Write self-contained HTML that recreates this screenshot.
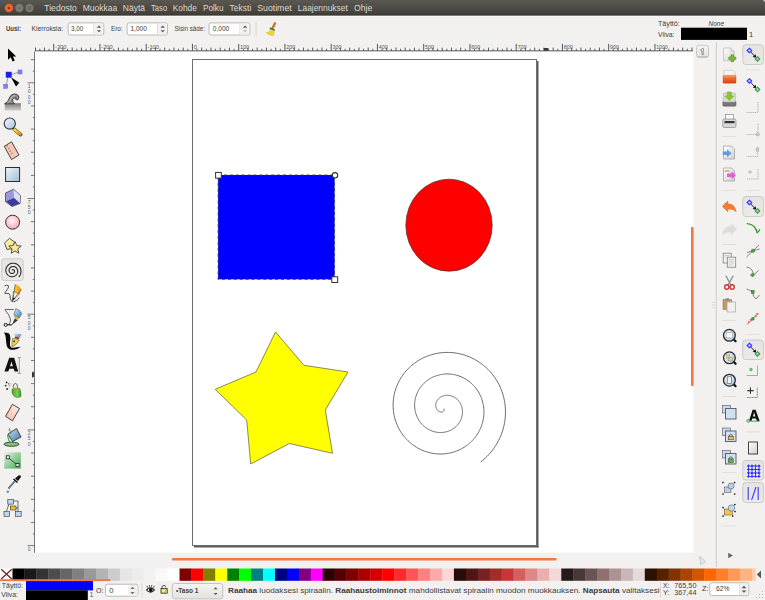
<!DOCTYPE html><html><head><meta charset="utf-8"><style>html,body{margin:0;padding:0;width:765px;height:600px;overflow:hidden;background:#f2f1f0}svg{display:block}text{font-family:"Liberation Sans",sans-serif}</style></head><body>
<svg width="765" height="600" viewBox="0 0 765 600">
<defs>
<linearGradient id="tb" x1="0" y1="0" x2="0" y2="1"><stop offset="0" stop-color="#5b5751"/><stop offset="0.85" stop-color="#45433e"/><stop offset="1" stop-color="#3a3935"/></linearGradient>
<linearGradient id="btn" x1="0" y1="0" x2="0" y2="1"><stop offset="0" stop-color="#f6f5f4"/><stop offset="1" stop-color="#e4e2df"/></linearGradient>
<linearGradient id="pressed" x1="0" y1="0" x2="0" y2="1"><stop offset="0" stop-color="#e6e4e1"/><stop offset="1" stop-color="#eceae8"/></linearGradient>
<radialGradient id="closeg" cx="0.5" cy="0.4" r="0.6"><stop offset="0" stop-color="#f47a4b"/><stop offset="1" stop-color="#e0501c"/></radialGradient>
</defs>
<rect x="0" y="0" width="765" height="600" fill="#f2f1f0"/>
<rect x="0" y="0" width="765" height="15" fill="url(#tb)"/>
<rect x="0" y="15" width="765" height="1" fill="#7e7c78"/><rect x="0" y="16" width="765" height="1" fill="#f9f9f8"/>
<path d="M0 0 H2.2 Q0.6 0.6 0 2.2Z" fill="#2f5fa8"/>
<path d="M765 0 H762.6 Q764.4 0.6 765 2.4Z" fill="#c4ccd8"/>
<circle cx="8.9" cy="8" r="4.3" fill="#ee5a2c"/>
<circle cx="8.9" cy="7.6" r="3.4" fill="#f26a3a" opacity="0.6"/>
<path d="M7.9 7 L9.9 9 M9.9 7 L7.9 9" stroke="#5a2a18" stroke-width="0.9"/>
<circle cx="19.3" cy="8" r="4.2" fill="#78756f"/>
<circle cx="19.3" cy="8" r="3.3" fill="#7e7b75"/>
<rect x="17.8" y="7.6" width="3" height="1" fill="#5c5a55"/>
<circle cx="29.5" cy="8" r="4.2" fill="#78756f"/>
<circle cx="29.5" cy="8" r="3.3" fill="#7e7b75"/>
<rect x="28.2" y="6.7" width="2.6" height="2.6" fill="none" stroke="#5c5a55" stroke-width="0.8"/>
<text x="44.3" y="11" font-size="8.6" fill="#dfdbd2" font-weight="normal" font-style="normal" text-anchor="start" textLength="32.6" lengthAdjust="spacingAndGlyphs">Tiedosto</text>
<text x="82.8" y="11" font-size="8.6" fill="#dfdbd2" font-weight="normal" font-style="normal" text-anchor="start" textLength="34.4" lengthAdjust="spacingAndGlyphs">Muokkaa</text>
<text x="122.8" y="11" font-size="8.6" fill="#dfdbd2" font-weight="normal" font-style="normal" text-anchor="start" textLength="22.2" lengthAdjust="spacingAndGlyphs">Näytä</text>
<text x="151" y="11" font-size="8.6" fill="#dfdbd2" font-weight="normal" font-style="normal" text-anchor="start" textLength="16.2" lengthAdjust="spacingAndGlyphs">Taso</text>
<text x="172.8" y="11" font-size="8.6" fill="#dfdbd2" font-weight="normal" font-style="normal" text-anchor="start" textLength="24.0" lengthAdjust="spacingAndGlyphs">Kohde</text>
<text x="203" y="11" font-size="8.6" fill="#dfdbd2" font-weight="normal" font-style="normal" text-anchor="start" textLength="20.5" lengthAdjust="spacingAndGlyphs">Polku</text>
<text x="229.6" y="11" font-size="8.6" fill="#dfdbd2" font-weight="normal" font-style="normal" text-anchor="start" textLength="21.7" lengthAdjust="spacingAndGlyphs">Teksti</text>
<text x="257.2" y="11" font-size="8.6" fill="#dfdbd2" font-weight="normal" font-style="normal" text-anchor="start" textLength="34.5" lengthAdjust="spacingAndGlyphs">Suotimet</text>
<text x="297.8" y="11" font-size="8.6" fill="#dfdbd2" font-weight="normal" font-style="normal" text-anchor="start" textLength="50.0" lengthAdjust="spacingAndGlyphs">Laajennukset</text>
<text x="353.9" y="11" font-size="8.6" fill="#dfdbd2" font-weight="normal" font-style="normal" text-anchor="start" textLength="18.4" lengthAdjust="spacingAndGlyphs">Ohje</text>
<text x="6" y="31.3" font-size="7.6" fill="#3c3c3c" font-weight="bold" font-style="normal" text-anchor="start" textLength="15" lengthAdjust="spacingAndGlyphs">Uusi:</text>
<text x="31.6" y="31.3" font-size="7.6" fill="#3c3c3c" font-weight="normal" font-style="normal" text-anchor="start" textLength="31.5" lengthAdjust="spacingAndGlyphs">Kierroksia:</text>
<rect x="68.2" y="22.9" width="35.599999999999994" height="12.100000000000001" rx="2" fill="#ffffff" stroke="#bdbab5" stroke-width="1"/>
<path d="M93.8 23.4 V34.5" stroke="#dcdad6" stroke-width="1"/>
<path d="M94.8 23.4 H102.3 V34.5 H94.8Z" fill="#f1f0ee"/>
<path d="M96.8 27.75 L99.0 25.55 L101.2 27.75Z" fill="#5a5a5a"/>
<path d="M96.8 30.15 L99.0 32.35 L101.2 30.15Z" fill="#5a5a5a"/>
<text x="70.9" y="31.3" font-size="7.6" fill="#3c3c3c" font-weight="normal" font-style="normal" text-anchor="start" textLength="12.3" lengthAdjust="spacingAndGlyphs">3,00</text>
<text x="110.9" y="31.3" font-size="7.6" fill="#3c3c3c" font-weight="normal" font-style="normal" text-anchor="start" textLength="11.7" lengthAdjust="spacingAndGlyphs">Ero:</text>
<rect x="127.1" y="22.9" width="40.400000000000006" height="12.100000000000001" rx="2" fill="#ffffff" stroke="#bdbab5" stroke-width="1"/>
<path d="M157.5 23.4 V34.5" stroke="#dcdad6" stroke-width="1"/>
<path d="M158.5 23.4 H166 V34.5 H158.5Z" fill="#f1f0ee"/>
<path d="M160.5 27.75 L162.7 25.55 L164.89999999999998 27.75Z" fill="#5a5a5a"/>
<path d="M160.5 30.15 L162.7 32.35 L164.89999999999998 30.15Z" fill="#5a5a5a"/>
<text x="130.4" y="31.3" font-size="7.6" fill="#3c3c3c" font-weight="normal" font-style="normal" text-anchor="start" textLength="16.5" lengthAdjust="spacingAndGlyphs">1,000</text>
<text x="174.4" y="31.3" font-size="7.6" fill="#3c3c3c" font-weight="normal" font-style="normal" text-anchor="start" textLength="30.6" lengthAdjust="spacingAndGlyphs">Sisin säde:</text>
<rect x="209.0" y="22.9" width="40.900000000000006" height="12.100000000000001" rx="2" fill="#ffffff" stroke="#bdbab5" stroke-width="1"/>
<path d="M239.9 23.4 V34.5" stroke="#dcdad6" stroke-width="1"/>
<path d="M240.9 23.4 H248.4 V34.5 H240.9Z" fill="#f1f0ee"/>
<path d="M242.9 27.75 L245.1 25.55 L247.29999999999998 27.75Z" fill="#5a5a5a"/>
<path d="M242.9 30.15 L245.1 32.35 L247.29999999999998 30.15Z" fill="#b8b8b8"/>
<text x="212.8" y="31.3" font-size="7.6" fill="#3c3c3c" font-weight="normal" font-style="normal" text-anchor="start" textLength="16.5" lengthAdjust="spacingAndGlyphs">0,000</text>
<rect x="255.6" y="22" width="1" height="14" fill="#d9d7d3"/>
<path d="M275 23.3 L273 27.3" stroke="#c27a22" stroke-width="2.4" stroke-linecap="round"/>
<path d="M269.8 28.6 Q271 33 266.2 32.3 Q268.5 35.8 273.6 35.6 Q274.6 32 274.3 30.3 Z" fill="#e9d835" stroke="#c9b020" stroke-width="0.4"/>
<path d="M270 28 L274.6 30" stroke="#5a5a50" stroke-width="1.4"/>
<text x="658" y="25.5" font-size="7.6" fill="#3c3c3c" font-weight="normal" font-style="normal" text-anchor="start" textLength="21.8" lengthAdjust="spacingAndGlyphs">Täyttö:</text>
<text x="708.5" y="25.5" font-size="7.6" fill="#3c3c3c" font-weight="normal" font-style="italic" text-anchor="start" textLength="15.5" lengthAdjust="spacingAndGlyphs">None</text>
<text x="658" y="36.5" font-size="7.6" fill="#3c3c3c" font-weight="normal" font-style="normal" text-anchor="start" textLength="16.5" lengthAdjust="spacingAndGlyphs">Viiva:</text>
<rect x="681" y="27.7" width="66" height="12.2" fill="#000"/>
<text x="749" y="37" font-size="7.6" fill="#3c3c3c" font-weight="normal" font-style="normal" text-anchor="start">1</text>
<rect x="35" y="52" width="658.3" height="500.7" fill="#ffffff"/>
<rect x="35" y="49" width="658" height="1" fill="#ffffff" opacity="0.7"/><rect x="35" y="50" width="658" height="1" fill="#8c8c8c"/><rect x="35" y="51" width="658" height="1" fill="#c8c8c8"/><path d="M35.5 47.6 V50.8" stroke="#444" stroke-width="0.9"/>
<rect x="34" y="51.5" width="1" height="501.2" fill="#777777"/>
<path d="M39.82 48.8V50.8 M44.45 47.6V50.8 M49.07 48.8V50.8 M53.70 43.9V50.8 M58.32 48.8V50.8 M62.95 47.6V50.8 M67.57 48.8V50.8 M72.20 47.6V50.8 M76.82 48.8V50.8 M81.45 47.6V50.8 M86.07 48.8V50.8 M90.70 47.6V50.8 M95.32 48.8V50.8 M99.95 43.9V50.8 M104.57 48.8V50.8 M109.20 47.6V50.8 M113.82 48.8V50.8 M118.45 47.6V50.8 M123.07 48.8V50.8 M127.70 47.6V50.8 M132.32 48.8V50.8 M136.95 47.6V50.8 M141.57 48.8V50.8 M146.20 43.9V50.8 M150.82 48.8V50.8 M155.45 47.6V50.8 M160.07 48.8V50.8 M164.70 47.6V50.8 M169.32 48.8V50.8 M173.95 47.6V50.8 M178.57 48.8V50.8 M183.20 47.6V50.8 M187.82 48.8V50.8 M192.45 43.9V50.8 M197.07 48.8V50.8 M201.70 47.6V50.8 M206.32 48.8V50.8 M210.95 47.6V50.8 M215.57 48.8V50.8 M220.20 47.6V50.8 M224.82 48.8V50.8 M229.45 47.6V50.8 M234.07 48.8V50.8 M238.70 43.9V50.8 M243.32 48.8V50.8 M247.95 47.6V50.8 M252.57 48.8V50.8 M257.20 47.6V50.8 M261.82 48.8V50.8 M266.45 47.6V50.8 M271.07 48.8V50.8 M275.70 47.6V50.8 M280.32 48.8V50.8 M284.95 43.9V50.8 M289.57 48.8V50.8 M294.20 47.6V50.8 M298.82 48.8V50.8 M303.45 47.6V50.8 M308.07 48.8V50.8 M312.70 47.6V50.8 M317.32 48.8V50.8 M321.95 47.6V50.8 M326.57 48.8V50.8 M331.20 43.9V50.8 M335.82 48.8V50.8 M340.45 47.6V50.8 M345.07 48.8V50.8 M349.70 47.6V50.8 M354.32 48.8V50.8 M358.95 47.6V50.8 M363.57 48.8V50.8 M368.20 47.6V50.8 M372.82 48.8V50.8 M377.45 43.9V50.8 M382.07 48.8V50.8 M386.70 47.6V50.8 M391.32 48.8V50.8 M395.95 47.6V50.8 M400.57 48.8V50.8 M405.20 47.6V50.8 M409.82 48.8V50.8 M414.45 47.6V50.8 M419.07 48.8V50.8 M423.70 43.9V50.8 M428.32 48.8V50.8 M432.95 47.6V50.8 M437.57 48.8V50.8 M442.20 47.6V50.8 M446.82 48.8V50.8 M451.45 47.6V50.8 M456.07 48.8V50.8 M460.70 47.6V50.8 M465.32 48.8V50.8 M469.95 43.9V50.8 M474.57 48.8V50.8 M479.20 47.6V50.8 M483.82 48.8V50.8 M488.45 47.6V50.8 M493.07 48.8V50.8 M497.70 47.6V50.8 M502.32 48.8V50.8 M506.95 47.6V50.8 M511.57 48.8V50.8 M516.20 43.9V50.8 M520.83 48.8V50.8 M525.45 47.6V50.8 M530.08 48.8V50.8 M534.70 47.6V50.8 M539.33 48.8V50.8 M543.95 47.6V50.8 M548.58 48.8V50.8 M553.20 47.6V50.8 M557.83 48.8V50.8 M562.45 43.9V50.8 M567.08 48.8V50.8 M571.70 47.6V50.8 M576.33 48.8V50.8 M580.95 47.6V50.8 M585.58 48.8V50.8 M590.20 47.6V50.8 M594.83 48.8V50.8 M599.45 47.6V50.8 M604.08 48.8V50.8 M608.70 43.9V50.8 M613.33 48.8V50.8 M617.95 47.6V50.8 M622.58 48.8V50.8 M627.20 47.6V50.8 M631.83 48.8V50.8 M636.45 47.6V50.8 M641.08 48.8V50.8 M645.70 47.6V50.8 M650.33 48.8V50.8 M654.95 43.9V50.8 M659.58 48.8V50.8 M664.20 47.6V50.8 M668.83 48.8V50.8 M673.45 47.6V50.8 M678.08 48.8V50.8 M682.70 47.6V50.8 M687.33 48.8V50.8 M691.95 47.6V50.8" stroke="#444" stroke-width="0.9"/>
<text x="55.0" y="48.6" font-size="5.9" fill="#4c5662" font-weight="normal" font-style="normal" text-anchor="start" textLength="11.3" lengthAdjust="spacingAndGlyphs">-300</text>
<text x="101.25" y="48.6" font-size="5.9" fill="#4c5662" font-weight="normal" font-style="normal" text-anchor="start" textLength="11.3" lengthAdjust="spacingAndGlyphs">-200</text>
<text x="147.5" y="48.6" font-size="5.9" fill="#4c5662" font-weight="normal" font-style="normal" text-anchor="start" textLength="11.3" lengthAdjust="spacingAndGlyphs">-100</text>
<text x="193.75" y="48.6" font-size="5.9" fill="#4c5662" font-weight="normal" font-style="normal" text-anchor="start" textLength="3.2" lengthAdjust="spacingAndGlyphs">0</text>
<text x="240.0" y="48.6" font-size="5.9" fill="#4c5662" font-weight="normal" font-style="normal" text-anchor="start" textLength="9.0" lengthAdjust="spacingAndGlyphs">100</text>
<text x="286.25" y="48.6" font-size="5.9" fill="#4c5662" font-weight="normal" font-style="normal" text-anchor="start" textLength="9.0" lengthAdjust="spacingAndGlyphs">200</text>
<text x="332.5" y="48.6" font-size="5.9" fill="#4c5662" font-weight="normal" font-style="normal" text-anchor="start" textLength="9.0" lengthAdjust="spacingAndGlyphs">300</text>
<text x="378.75" y="48.6" font-size="5.9" fill="#4c5662" font-weight="normal" font-style="normal" text-anchor="start" textLength="9.0" lengthAdjust="spacingAndGlyphs">400</text>
<text x="425.0" y="48.6" font-size="5.9" fill="#4c5662" font-weight="normal" font-style="normal" text-anchor="start" textLength="9.0" lengthAdjust="spacingAndGlyphs">500</text>
<text x="471.25" y="48.6" font-size="5.9" fill="#4c5662" font-weight="normal" font-style="normal" text-anchor="start" textLength="9.0" lengthAdjust="spacingAndGlyphs">600</text>
<text x="517.5" y="48.6" font-size="5.9" fill="#4c5662" font-weight="normal" font-style="normal" text-anchor="start" textLength="9.0" lengthAdjust="spacingAndGlyphs">700</text>
<text x="563.75" y="48.6" font-size="5.9" fill="#4c5662" font-weight="normal" font-style="normal" text-anchor="start" textLength="9.0" lengthAdjust="spacingAndGlyphs">800</text>
<text x="610.0" y="48.6" font-size="5.9" fill="#4c5662" font-weight="normal" font-style="normal" text-anchor="start" textLength="9.0" lengthAdjust="spacingAndGlyphs">900</text>
<text x="656.25" y="48.6" font-size="5.9" fill="#4c5662" font-weight="normal" font-style="normal" text-anchor="start" textLength="11.3" lengthAdjust="spacingAndGlyphs">1000</text>
<path d="M27.5 545.60H34.5 M32.8 534.03H34.5 M30.9 522.46H34.5 M32.8 510.89H34.5 M30.9 499.32H34.5 M32.8 487.75H34.5 M30.9 476.18H34.5 M32.8 464.61H34.5 M30.9 453.04H34.5 M32.8 441.47H34.5 M27.5 429.90H34.5 M32.8 418.33H34.5 M30.9 406.76H34.5 M32.8 395.19H34.5 M30.9 383.62H34.5 M32.8 372.05H34.5 M30.9 360.48H34.5 M32.8 348.91H34.5 M30.9 337.34H34.5 M32.8 325.77H34.5 M27.5 314.20H34.5 M32.8 302.63H34.5 M30.9 291.06H34.5 M32.8 279.49H34.5 M30.9 267.92H34.5 M32.8 256.35H34.5 M30.9 244.78H34.5 M32.8 233.21H34.5 M30.9 221.64H34.5 M32.8 210.07H34.5 M27.5 198.50H34.5 M32.8 186.93H34.5 M30.9 175.36H34.5 M32.8 163.79H34.5 M30.9 152.22H34.5 M32.8 140.65H34.5 M30.9 129.08H34.5 M32.8 117.51H34.5 M30.9 105.94H34.5 M32.8 94.37H34.5 M27.5 82.80H34.5 M32.8 71.23H34.5 M30.9 59.66H34.5" stroke="#5a5a5a" stroke-width="0.8"/>
<text x="29.1" y="550.8" font-size="5.0" fill="#56606c" font-weight="normal" font-style="normal" text-anchor="middle">0</text>
<text x="29.1" y="435.1" font-size="5.0" fill="#56606c" font-weight="normal" font-style="normal" text-anchor="middle">2</text>
<text x="29.1" y="440.4" font-size="5.0" fill="#56606c" font-weight="normal" font-style="normal" text-anchor="middle">5</text>
<text x="29.1" y="445.7" font-size="5.0" fill="#56606c" font-weight="normal" font-style="normal" text-anchor="middle">0</text>
<text x="29.1" y="319.4" font-size="5.0" fill="#56606c" font-weight="normal" font-style="normal" text-anchor="middle">5</text>
<text x="29.1" y="324.7" font-size="5.0" fill="#56606c" font-weight="normal" font-style="normal" text-anchor="middle">0</text>
<text x="29.1" y="330.0" font-size="5.0" fill="#56606c" font-weight="normal" font-style="normal" text-anchor="middle">0</text>
<text x="29.1" y="203.7" font-size="5.0" fill="#56606c" font-weight="normal" font-style="normal" text-anchor="middle">7</text>
<text x="29.1" y="209.0" font-size="5.0" fill="#56606c" font-weight="normal" font-style="normal" text-anchor="middle">5</text>
<text x="29.1" y="214.3" font-size="5.0" fill="#56606c" font-weight="normal" font-style="normal" text-anchor="middle">0</text>
<text x="29.1" y="88.0" font-size="5.0" fill="#56606c" font-weight="normal" font-style="normal" text-anchor="middle">1</text>
<text x="29.1" y="93.3" font-size="5.0" fill="#56606c" font-weight="normal" font-style="normal" text-anchor="middle">0</text>
<text x="29.1" y="98.6" font-size="5.0" fill="#56606c" font-weight="normal" font-style="normal" text-anchor="middle">0</text>
<text x="29.1" y="103.9" font-size="5.0" fill="#56606c" font-weight="normal" font-style="normal" text-anchor="middle">0</text>
<path d="M543.6 47.9 H548.4 L547.8 50.8 H544.2 Z" fill="#3a3a3a"/>
<path d="M32 371.8 L34.2 372.8 V376.8 L32 377.7 Z" fill="#3a3a3a"/>
<rect x="192.5" y="59.5" width="344" height="486" fill="#fff" stroke="#6e6e6e" stroke-width="1"/>
<rect x="537" y="61" width="1.5" height="486.5" fill="#5c5c5c"/>
<rect x="194" y="546" width="344.5" height="1.5" fill="#5c5c5c"/>
<rect x="218.1" y="175" width="116.5" height="104.3" fill="#0000ff"/>
<rect x="218.1" y="175" width="116.5" height="104.3" fill="none" stroke="#3a3a3a" stroke-width="0.9" stroke-dasharray="3 2.9"/>
<rect x="215.6" y="172.4" width="5.7" height="5.7" fill="#fff" stroke="#333" stroke-width="1"/>
<rect x="331.8" y="276.8" width="5.9" height="5.7" fill="#fff" stroke="#333" stroke-width="1"/>
<circle cx="335" cy="175.3" r="2.7" fill="#fff" stroke="#333" stroke-width="1.1"/>
<ellipse cx="449" cy="225.2" rx="43.2" ry="46" fill="#ff0000" stroke="#4a3030" stroke-width="0.7"/>
<polygon points="275.5,332 304,365.3 348,372 325.3,410 332.5,453.3 289.3,443.5 250.7,464 246.7,420 215.2,389.3 256,372" fill="#ffff00" stroke="#5a5a30" stroke-width="0.7"/>
<polyline points="443.90,408.60 443.96,408.69 444.01,408.78 444.06,408.88 444.10,408.98 444.13,409.09 444.16,409.19 444.18,409.30 444.20,409.41 444.21,409.52 444.21,409.63 444.21,409.75 444.19,409.86 444.18,409.98 444.15,410.09 444.12,410.21 444.08,410.32 444.03,410.43 443.98,410.54 443.92,410.65 443.85,410.76 443.78,410.86 443.70,410.97 443.61,411.07 443.52,411.16 443.42,411.26 443.31,411.35 443.20,411.43 443.08,411.51 442.96,411.59 442.83,411.66 442.70,411.72 442.56,411.78 442.41,411.84 442.26,411.89 442.11,411.93 441.95,411.96 441.79,411.99 441.62,412.01 441.45,412.03 441.28,412.04 441.11,412.04 440.93,412.03 440.75,412.01 440.57,411.99 440.39,411.96 440.20,411.92 440.02,411.87 439.83,411.81 439.65,411.75 439.46,411.67 439.28,411.59 439.09,411.50 438.91,411.40 438.73,411.29 438.55,411.18 438.37,411.05 438.20,410.92 438.03,410.77 437.86,410.62 437.69,410.46 437.53,410.30 437.38,410.12 437.23,409.93 437.08,409.74 436.94,409.54 436.81,409.33 436.68,409.12 436.56,408.90 436.45,408.67 436.34,408.43 436.24,408.19 436.15,407.94 436.07,407.68 436.00,407.42 435.93,407.15 435.87,406.88 435.83,406.60 435.79,406.32 435.76,406.04 435.75,405.75 435.74,405.45 435.74,405.16 435.76,404.86 435.78,404.55 435.82,404.25 435.86,403.94 435.92,403.64 435.99,403.33 436.07,403.02 436.17,402.71 436.27,402.40 436.39,402.10 436.52,401.79 436.66,401.49 436.81,401.18 436.97,400.88 437.15,400.59 437.34,400.30 437.54,400.01 437.75,399.72 437.97,399.44 438.21,399.17 438.45,398.90 438.71,398.64 438.98,398.38 439.26,398.13 439.55,397.89 439.85,397.66 440.16,397.44 440.48,397.22 440.82,397.02 441.16,396.82 441.51,396.63 441.87,396.46 442.23,396.29 442.61,396.14 442.99,396.00 443.39,395.87 443.79,395.75 444.19,395.64 444.60,395.55 445.02,395.47 445.45,395.41 445.88,395.35 446.31,395.32 446.75,395.29 447.19,395.29 447.64,395.29 448.09,395.31 448.54,395.35 448.99,395.40 449.45,395.47 449.90,395.55 450.36,395.65 450.81,395.76 451.26,395.89 451.72,396.04 452.17,396.20 452.62,396.38 453.06,396.57 453.50,396.78 453.94,397.01 454.37,397.25 454.80,397.51 455.22,397.78 455.63,398.07 456.04,398.37 456.44,398.69 456.83,399.03 457.22,399.38 457.59,399.74 457.96,400.12 458.31,400.51 458.65,400.92 458.98,401.34 459.30,401.77 459.61,402.22 459.90,402.68 460.18,403.15 460.45,403.63 460.70,404.13 460.94,404.63 461.16,405.15 461.37,405.67 461.56,406.21 461.73,406.75 461.89,407.31 462.03,407.87 462.15,408.44 462.26,409.01 462.34,409.60 462.41,410.18 462.46,410.78 462.49,411.37 462.50,411.98 462.49,412.58 462.46,413.19 462.41,413.80 462.34,414.41 462.25,415.02 462.14,415.63 462.01,416.25 461.86,416.86 461.69,417.46 461.49,418.07 461.28,418.67 461.05,419.27 460.79,419.86 460.52,420.45 460.23,421.03 459.91,421.61 459.58,422.17 459.22,422.73 458.85,423.28 458.45,423.82 458.04,424.35 457.61,424.87 457.16,425.38 456.69,425.87 456.20,426.36 455.69,426.82 455.17,427.28 454.63,427.72 454.08,428.14 453.50,428.55 452.92,428.94 452.31,429.31 451.70,429.67 451.07,430.00 450.42,430.32 449.76,430.62 449.09,430.90 448.41,431.16 447.72,431.39 447.02,431.61 446.30,431.80 445.58,431.98 444.85,432.12 444.11,432.25 443.36,432.35 442.61,432.43 441.86,432.49 441.09,432.52 440.33,432.53 439.56,432.51 438.79,432.47 438.01,432.40 437.24,432.31 436.47,432.19 435.69,432.05 434.92,431.88 434.15,431.68 433.39,431.46 432.63,431.22 431.87,430.95 431.12,430.65 430.38,430.33 429.64,429.99 428.91,429.62 428.20,429.22 427.49,428.80 426.79,428.36 426.11,427.89 425.43,427.40 424.77,426.88 424.13,426.35 423.50,425.79 422.88,425.20 422.29,424.60 421.70,423.97 421.14,423.33 420.60,422.66 420.07,421.98 419.57,421.27 419.09,420.55 418.62,419.81 418.19,419.05 417.77,418.27 417.37,417.48 417.01,416.67 416.66,415.85 416.34,415.02 416.05,414.17 415.78,413.31 415.54,412.44 415.32,411.56 415.14,410.67 414.98,409.77 414.85,408.86 414.75,407.94 414.67,407.02 414.63,406.10 414.62,405.16 414.63,404.23 414.68,403.29 414.75,402.36 414.86,401.42 414.99,400.48 415.16,399.54 415.36,398.61 415.58,397.68 415.84,396.75 416.13,395.83 416.45,394.92 416.80,394.01 417.17,393.11 417.58,392.22 418.02,391.35 418.49,390.48 418.98,389.62 419.51,388.78 420.06,387.96 420.64,387.14 421.25,386.35 421.88,385.57 422.55,384.81 423.23,384.07 423.95,383.35 424.69,382.65 425.45,381.97 426.24,381.31 427.05,380.67 427.88,380.07 428.74,379.48 429.61,378.92 430.51,378.39 431.42,377.88 432.35,377.40 433.31,376.95 434.27,376.53 435.26,376.14 436.26,375.78 437.27,375.45 438.30,375.15 439.34,374.89 440.39,374.65 441.45,374.45 442.52,374.28 443.59,374.15 444.68,374.05 445.77,373.98 446.86,373.95 447.96,373.95 449.07,373.99 450.17,374.06 451.27,374.17 452.38,374.32 453.48,374.50 454.58,374.71 455.67,374.96 456.76,375.25 457.85,375.57 458.92,375.92 459.99,376.32 461.05,376.74 462.09,377.20 463.13,377.70 464.15,378.23 465.16,378.79 466.15,379.39 467.12,380.02 468.08,380.68 469.02,381.37 469.94,382.10 470.83,382.85 471.71,383.64 472.56,384.46 473.39,385.30 474.20,386.17 474.97,387.08 475.72,388.00 476.45,388.96 477.14,389.94 477.81,390.94 478.44,391.97 479.05,393.02 479.62,394.09 480.16,395.18 480.67,396.29 481.14,397.42 481.58,398.57 481.98,399.73 482.34,400.91 482.67,402.11 482.96,403.31 483.22,404.53 483.43,405.76 483.61,407.00 483.75,408.25 483.85,409.50 483.91,410.76 483.93,412.03 483.91,413.29 483.85,414.56 483.75,415.83 483.61,417.11 483.43,418.37 483.20,419.64 482.94,420.90 482.64,422.16 482.29,423.41 481.91,424.65 481.48,425.88 481.02,427.10 480.51,428.31 479.97,429.50 479.39,430.68 478.77,431.84 478.11,432.99 477.41,434.12 476.68,435.23 475.90,436.31 475.10,437.38 474.26,438.42 473.38,439.44 472.47,440.43 471.52,441.39 470.55,442.33 469.54,443.24 468.50,444.11 467.43,444.96 466.33,445.77 465.21,446.55 464.05,447.30 462.87,448.01 461.67,448.69 460.44,449.32 459.19,449.92 457.92,450.49 456.63,451.01 455.32,451.49 453.99,451.94 452.65,452.34 451.29,452.70 449.91,453.01 448.53,453.29 447.13,453.52 445.72,453.71 444.30,453.85 442.88,453.95 441.45,454.00 440.01,454.01 438.58,453.97 437.14,453.89 435.70,453.76 434.26,453.59 432.83,453.37 431.40,453.10 429.98,452.79 428.56,452.43 427.15,452.03 425.75,451.58 424.37,451.09 422.99,450.55 421.63,449.97 420.29,449.34 418.97,448.67 417.66,447.96 416.37,447.20 415.11,446.41 413.87,445.57 412.65,444.69 411.46,443.77 410.30,442.81 409.16,441.81 408.05,440.77 406.98,439.70 405.93,438.59 404.92,437.45 403.95,436.27 403.01,435.06 402.10,433.82 401.24,432.55 400.41,431.25 399.62,429.92 398.88,428.56 398.17,427.18 397.51,425.77 396.89,424.34 396.32,422.88 395.79,421.41 395.30,419.92 394.87,418.41 394.48,416.88 394.13,415.34 393.84,413.78 393.59,412.21 393.40,410.64 393.25,409.05 393.15,407.46 393.11,405.86 393.11,404.25 393.16,402.65 393.27,401.04 393.43,399.44 393.63,397.83 393.89,396.23 394.20,394.64 394.56,393.05 394.97,391.47 395.43,389.91 395.94,388.35 396.50,386.81 397.12,385.28 397.78,383.77 398.49,382.28 399.24,380.81 400.05,379.36 400.90,377.94 401.80,376.54 402.74,375.16 403.73,373.82 404.76,372.50 405.84,371.21 406.96,369.96 408.12,368.73 409.32,367.55 410.56,366.40 411.84,365.28 413.15,364.21 414.50,363.17 415.89,362.18 417.31,361.23 418.76,360.32 420.24,359.46 421.75,358.64 423.29,357.87 424.86,357.15 426.45,356.47 428.06,355.85 429.70,355.27 431.36,354.75 433.03,354.27 434.73,353.85 436.44,353.48 438.16,353.17 439.90,352.91 441.65,352.70 443.40,352.55 445.16,352.45 446.93,352.41 448.71,352.43 450.48,352.50 452.26,352.63 454.03,352.81 455.80,353.05 457.56,353.35 459.32,353.70 461.07,354.11 462.81,354.57 464.54,355.09 466.25,355.67 467.95,356.30 469.62,356.98 471.28,357.72 472.92,358.51 474.54,359.36 476.13,360.25 477.70,361.20 479.23,362.20 480.74,363.25 482.22,364.35 483.66,365.50 485.07,366.69 486.45,367.93 487.78,369.21 489.08,370.54 490.34,371.91 491.56,373.32 492.73,374.78 493.86,376.27 494.94,377.80 495.98,379.36 496.97,380.96 497.91,382.60 498.80,384.26 499.63,385.96 500.42,387.68 501.15,389.43 501.83,391.21 502.45,393.01 503.01,394.83 503.52,396.68 503.97,398.54 504.37,400.41 504.70,402.31 504.98,404.21 505.19,406.13 505.35,408.05 505.44,409.99 505.48,411.92 505.45,413.87 505.36,415.81 505.21,417.75 505.00,419.69 504.73,421.63 504.39,423.56 504.00,425.48 503.54,427.39 503.02,429.29 502.44,431.18 501.81,433.05 501.11,434.90 500.35,436.73 499.53,438.54 498.66,440.33 497.73,442.09 496.74,443.83 495.69,445.53 494.59,447.21 493.44,448.85 492.23,450.45 490.97,452.02 489.66,453.56 488.30,455.05 486.90,456.50 485.44,457.91 483.94,459.28 482.39,460.60 480.80,461.87" fill="none" stroke="#6a6a6a" stroke-width="1.0"/>
<rect x="172" y="558" width="384.6" height="2.6" rx="1" fill="#f07746"/>
<rect x="691" y="227" width="2.6" height="159" rx="1" fill="#f07746"/>
<path d="M699.6 556.2 L705.8 561.8 L700.6 564.6Z" fill="#e2e8e2" stroke="#bcbcbc" stroke-width="0.7" stroke-linejoin="round"/>
<rect x="696.5" y="45.3" width="12" height="12" rx="2.5" fill="url(#btn)" stroke="#bdbab5" stroke-width="0.8"/>
<path d="M700.6 50.3 Q701.3 48.4 703.3 48.4 V54.6 H701.9 V50.8 Z" fill="#fff" stroke="#7a7a7a" stroke-width="0.8"/>
<rect x="697" y="56.4" width="11.2" height="0.9" rx="0.4" fill="#b0ada8"/>
<g fill="#c8c6c2"><rect x="712" y="302" width="3" height="0.6"/><rect x="712" y="304.8" width="3" height="0.6"/><rect x="712" y="307.5" width="3" height="0.6"/></g>
<rect x="715.8" y="42" width="1" height="525" fill="#cdcbc7"/>
<rect x="0" y="568.5" width="12.5" height="12.3" fill="#fff"/>
<path d="M1.2 569.2 L11.8 579 M11.8 569.2 L1.2 579" stroke="#7e1e1e" stroke-width="1.25"/>
<rect x="12.50" y="568.5" width="12.23" height="12.3" fill="#000000"/>
<rect x="24.43" y="568.5" width="12.23" height="12.3" fill="#1a1a1a"/>
<rect x="36.36" y="568.5" width="12.23" height="12.3" fill="#333333"/>
<rect x="48.29" y="568.5" width="12.23" height="12.3" fill="#4d4d4d"/>
<rect x="60.22" y="568.5" width="12.23" height="12.3" fill="#666666"/>
<rect x="72.15" y="568.5" width="12.23" height="12.3" fill="#808080"/>
<rect x="84.08" y="568.5" width="12.23" height="12.3" fill="#999999"/>
<rect x="96.01" y="568.5" width="12.23" height="12.3" fill="#b3b3b3"/>
<rect x="107.94" y="568.5" width="12.23" height="12.3" fill="#cccccc"/>
<rect x="119.87" y="568.5" width="12.23" height="12.3" fill="#e6e6e6"/>
<rect x="131.80" y="568.5" width="12.23" height="12.3" fill="#ececec"/>
<rect x="143.73" y="568.5" width="12.23" height="12.3" fill="#f2f2f2"/>
<rect x="155.66" y="568.5" width="12.23" height="12.3" fill="#f9f9f9"/>
<rect x="167.59" y="568.5" width="12.23" height="12.3" fill="#ffffff"/>
<rect x="179.52" y="568.5" width="12.23" height="12.3" fill="#800000"/>
<rect x="191.45" y="568.5" width="12.23" height="12.3" fill="#ff0000"/>
<rect x="203.38" y="568.5" width="12.23" height="12.3" fill="#808000"/>
<rect x="215.31" y="568.5" width="12.23" height="12.3" fill="#ffff00"/>
<rect x="227.24" y="568.5" width="12.23" height="12.3" fill="#008000"/>
<rect x="239.17" y="568.5" width="12.23" height="12.3" fill="#00ff00"/>
<rect x="251.10" y="568.5" width="12.23" height="12.3" fill="#008080"/>
<rect x="263.03" y="568.5" width="12.23" height="12.3" fill="#00ffff"/>
<rect x="274.96" y="568.5" width="12.23" height="12.3" fill="#000080"/>
<rect x="286.89" y="568.5" width="12.23" height="12.3" fill="#0000ff"/>
<rect x="298.82" y="568.5" width="12.23" height="12.3" fill="#800080"/>
<rect x="310.75" y="568.5" width="12.23" height="12.3" fill="#ff00ff"/>
<rect x="322.68" y="568.5" width="12.23" height="12.3" fill="#2b0000"/>
<rect x="334.61" y="568.5" width="12.23" height="12.3" fill="#550000"/>
<rect x="346.54" y="568.5" width="12.23" height="12.3" fill="#800000"/>
<rect x="358.47" y="568.5" width="12.23" height="12.3" fill="#aa0000"/>
<rect x="370.40" y="568.5" width="12.23" height="12.3" fill="#d40000"/>
<rect x="382.33" y="568.5" width="12.23" height="12.3" fill="#ff0000"/>
<rect x="394.26" y="568.5" width="12.23" height="12.3" fill="#ff2a2a"/>
<rect x="406.19" y="568.5" width="12.23" height="12.3" fill="#ff5555"/>
<rect x="418.12" y="568.5" width="12.23" height="12.3" fill="#ff8080"/>
<rect x="430.05" y="568.5" width="12.23" height="12.3" fill="#ffaaaa"/>
<rect x="441.98" y="568.5" width="12.23" height="12.3" fill="#ffd5d5"/>
<rect x="453.91" y="568.5" width="12.23" height="12.3" fill="#280b0b"/>
<rect x="465.84" y="568.5" width="12.23" height="12.3" fill="#501616"/>
<rect x="477.77" y="568.5" width="12.23" height="12.3" fill="#782121"/>
<rect x="489.70" y="568.5" width="12.23" height="12.3" fill="#a02c2c"/>
<rect x="501.63" y="568.5" width="12.23" height="12.3" fill="#c83737"/>
<rect x="513.56" y="568.5" width="12.23" height="12.3" fill="#d35f5f"/>
<rect x="525.49" y="568.5" width="12.23" height="12.3" fill="#de8787"/>
<rect x="537.42" y="568.5" width="12.23" height="12.3" fill="#e9afaf"/>
<rect x="549.35" y="568.5" width="12.23" height="12.3" fill="#f4d7d7"/>
<rect x="561.28" y="568.5" width="12.23" height="12.3" fill="#241c1c"/>
<rect x="573.21" y="568.5" width="12.23" height="12.3" fill="#483737"/>
<rect x="585.14" y="568.5" width="12.23" height="12.3" fill="#6c5353"/>
<rect x="597.07" y="568.5" width="12.23" height="12.3" fill="#916f6f"/>
<rect x="609.00" y="568.5" width="12.23" height="12.3" fill="#ac9393"/>
<rect x="620.93" y="568.5" width="12.23" height="12.3" fill="#c8b7b7"/>
<rect x="632.86" y="568.5" width="12.23" height="12.3" fill="#e3dbdb"/>
<rect x="644.79" y="568.5" width="12.23" height="12.3" fill="#2b1100"/>
<rect x="656.72" y="568.5" width="12.23" height="12.3" fill="#552200"/>
<rect x="668.65" y="568.5" width="12.23" height="12.3" fill="#803300"/>
<rect x="680.58" y="568.5" width="12.23" height="12.3" fill="#aa4400"/>
<rect x="692.51" y="568.5" width="12.23" height="12.3" fill="#d45500"/>
<rect x="704.44" y="568.5" width="12.23" height="12.3" fill="#ff6600"/>
<rect x="716.37" y="568.5" width="12.23" height="12.3" fill="#ff7f2a"/>
<rect x="728.30" y="568.5" width="12.23" height="12.3" fill="#ff9955"/>
<rect x="740.23" y="568.5" width="12.23" height="12.3" fill="#ffb380"/>
<rect x="752.16" y="568.5" width="3.64" height="12.3" fill="#ffccaa"/>
<path d="M761 570.6 L756.8 574.6 L761 578.6Z" fill="#555"/>
<rect x="0" y="579.2" width="110.3" height="1.9" fill="#f07746"/>
<text x="1.8" y="587.9" font-size="7.3" fill="#3c3c3c" font-weight="normal" font-style="normal" text-anchor="start" textLength="21.2" lengthAdjust="spacingAndGlyphs">Täyttö:</text>
<text x="1.3" y="596.6" font-size="7.3" fill="#3c3c3c" font-weight="normal" font-style="normal" text-anchor="start" textLength="16.7" lengthAdjust="spacingAndGlyphs">Viiva:</text>
<rect x="26" y="581.1" width="67" height="9.3" fill="#0000ff"/>
<rect x="26" y="590.3" width="61.8" height="9.7" fill="#000"/>
<text x="89.4" y="596.6" font-size="7.2" fill="#666" font-weight="normal" font-style="normal" text-anchor="start">1</text>
<text x="96" y="592.5" font-size="7.6" fill="#3c3c3c" font-weight="normal" font-style="normal" text-anchor="start" textLength="7.5" lengthAdjust="spacingAndGlyphs">O:</text>
<rect x="105.5" y="584.2" width="32.5" height="12" rx="2" fill="#fff" stroke="#bdbab5" stroke-width="1"/>
<path d="M128 585 H137.5 V596 H128Z" fill="#f1f0ee"/>
<path d="M130.3 589 L132.5 586.8 L134.7 589Z M130.3 592 L132.5 594.2 L134.7 592Z" fill="#777"/>
<text x="109.2" y="592.8" font-size="7.6" fill="#3c3c3c" font-weight="normal" font-style="normal" text-anchor="start">0</text>
<rect x="141.5" y="583" width="0.8" height="15" fill="#d6d4d0"/>
<g transform="translate(146,585)"><path d="M0.5 5 Q4.5 0.5 8.5 5 Q4.5 9.5 0.5 5Z" fill="#fff" stroke="#111" stroke-width="1.1"/><circle cx="4.8" cy="5" r="1.9" fill="#111"/><path d="M1.5 2.5 L0.8 1 M3.5 1.7 L3.3 0 M5.5 1.7 L5.8 0 M7.5 2.5 L8.3 1" stroke="#111" stroke-width="0.8"/></g>
<path d="M162 588.6 V587 Q162 585.4 163.8 585.4 Q165.6 585.4 165.8 587.2" fill="none" stroke="#444" stroke-width="0.9"/>
<rect x="161" y="588.6" width="6.2" height="4.6" fill="#e4cc50" stroke="#333" stroke-width="0.8"/>
<rect x="162.2" y="589.5" width="2.2" height="2.6" fill="#fffbe0" opacity="0.8"/>
<rect x="172.3" y="583.5" width="50.5" height="15.3" rx="2.5" fill="url(#btn)" stroke="#bcb9b4" stroke-width="0.8"/>
<text x="176.1" y="592.5" font-size="7.0" fill="#3c3c3c" font-weight="bold" font-style="normal" text-anchor="start" textLength="22.4" lengthAdjust="spacingAndGlyphs">•Taso 1</text>
<path d="M213.6 589.2 L215.6 587.2 L217.6 589.2Z M213.6 593 L215.6 595 L217.6 593Z" fill="#555"/>
<text x="228" y="592.8" font-size="7.9" fill="#3c3c3c" textLength="431.6" lengthAdjust="spacingAndGlyphs"><tspan font-weight="bold">Raahaa</tspan> luodaksesi spiraalin. <tspan font-weight="bold">Raahaustoiminnot</tspan> mahdollistavat spiraalin muodon muokkauksen. <tspan font-weight="bold">Napsauta</tspan> valitaksesi</text>
<rect x="660" y="582" width="0.8" height="16" fill="#d6d4d0"/>
<text x="662.9" y="587.6" font-size="7.2" fill="#3c3c3c" font-weight="normal" font-style="normal" text-anchor="start" textLength="6.5" lengthAdjust="spacingAndGlyphs">X:</text>
<text x="662.9" y="595.3" font-size="7.2" fill="#3c3c3c" font-weight="normal" font-style="normal" text-anchor="start" textLength="6.5" lengthAdjust="spacingAndGlyphs">Y:</text>
<text x="674.3" y="587.6" font-size="7.2" fill="#3c3c3c" font-weight="normal" font-style="normal" text-anchor="start" textLength="22.1" lengthAdjust="spacingAndGlyphs">765,50</text>
<text x="674.3" y="595.3" font-size="7.2" fill="#3c3c3c" font-weight="normal" font-style="normal" text-anchor="start" textLength="22.1" lengthAdjust="spacingAndGlyphs">367,44</text>
<text x="702" y="591.2" font-size="7.6" fill="#3c3c3c" font-weight="normal" font-style="normal" text-anchor="start" textLength="6.5" lengthAdjust="spacingAndGlyphs">Z:</text>
<rect x="709.8" y="582.8" width="39" height="12.8" rx="2" fill="#fff" stroke="#bdbab5" stroke-width="1"/>
<path d="M739.5 583.4 H748.2 V595 H739.5Z" fill="#f1f0ee"/><rect x="739" y="583.3" width="0.7" height="12" fill="#dcdad6"/>
<path d="M741.6 588.2 L744 585.8 L746.4 588.2Z M741.6 590.4 L744 592.8 L746.4 590.4Z" fill="#555"/>
<text x="716" y="591" font-size="7.8" fill="#3c3c3c" font-weight="normal" font-style="normal" text-anchor="start" textLength="13.4" lengthAdjust="spacingAndGlyphs">62%</text>
<g fill="#b8b5b0"><rect x="762" y="597" width="1" height="1"/><rect x="759" y="597" width="1" height="1"/><rect x="762" y="594" width="1" height="1"/><rect x="756" y="597" width="1" height="1"/><rect x="759" y="594" width="1" height="1"/><rect x="762" y="591" width="1" height="1"/></g>
<rect x="1.8" y="258.8" width="21.4" height="21.8" rx="2.5" fill="url(#pressed)" stroke="#c4c1bc" stroke-width="0.8"/>
<defs>
<linearGradient id="rectg" x1="0" y1="0" x2="1" y2="1"><stop offset="0" stop-color="#f2f6fb"/><stop offset="1" stop-color="#9fbcd6"/></linearGradient>
<radialGradient id="ellg" cx="0.45" cy="0.4" r="0.6"><stop offset="0" stop-color="#fff4f6"/><stop offset="1" stop-color="#f7a9b6"/></radialGradient>
<linearGradient id="starg" x1="0" y1="0" x2="1" y2="1"><stop offset="0" stop-color="#fffbd0"/><stop offset="1" stop-color="#f0dc60"/></linearGradient>
<linearGradient id="waveg" x1="0" y1="0" x2="0" y2="1"><stop offset="0" stop-color="#7a7a7a"/><stop offset="1" stop-color="#d2d2d2"/></linearGradient>
<linearGradient id="greeng" x1="0" y1="0" x2="1" y2="1"><stop offset="0" stop-color="#e6f4e6"/><stop offset="1" stop-color="#3faa4f"/></linearGradient>
<linearGradient id="blueg" x1="0" y1="0" x2="1" y2="1"><stop offset="0" stop-color="#cfe3f1"/><stop offset="1" stop-color="#3a78a8"/></linearGradient>
<linearGradient id="pageg" x1="0" y1="0" x2="1" y2="1"><stop offset="0" stop-color="#ffffff"/><stop offset="1" stop-color="#d0d0d0"/></linearGradient>
<linearGradient id="lensg" x1="0" y1="0" x2="1" y2="1"><stop offset="0" stop-color="#f2f7fc"/><stop offset="1" stop-color="#a9c5e2"/></linearGradient>
<linearGradient id="penblue" x1="0" y1="0" x2="1" y2="1"><stop offset="0" stop-color="#d8f0f8"/><stop offset="1" stop-color="#3a7ab0"/></linearGradient>
<linearGradient id="folderg" x1="0" y1="0" x2="0" y2="1"><stop offset="0" stop-color="#f4a060"/><stop offset="0.35" stop-color="#ec7030"/><stop offset="1" stop-color="#d84010"/></linearGradient>
<linearGradient id="sprayg" x1="0" y1="0" x2="1" y2="0"><stop offset="0" stop-color="#4aa030"/><stop offset="0.6" stop-color="#7cd050"/><stop offset="1" stop-color="#3a8a20"/></linearGradient>
<linearGradient id="eraserg" x1="1" y1="0" x2="0" y2="1"><stop offset="0" stop-color="#fdf0ea"/><stop offset="1" stop-color="#f2b8a0"/></linearGradient>
<linearGradient id="handleg" x1="0" y1="0" x2="1" y2="1"><stop offset="0" stop-color="#f8e848"/><stop offset="1" stop-color="#f09010"/></linearGradient>
<linearGradient id="pencilg" x1="0" y1="0" x2="1" y2="0"><stop offset="0" stop-color="#f4f070"/><stop offset="0.35" stop-color="#f6c02a"/><stop offset="1" stop-color="#f09010"/></linearGradient>
</defs>
<path d="M8 48.5 V59.7 L10.7 57.2 L12.6 61.6 L14.8 60.6 L12.9 56.5 L16.2 56.5Z" fill="#000"/>
<path d="M9 75 L20 72 M8.5 75 L6 86" stroke="#888" stroke-width="0.8" fill="none"/>
<rect x="6" y="72" width="5.5" height="5.5" fill="#1a1aff" stroke="#3a3ad0" stroke-width="0.5"/>
<rect x="18" y="70" width="4" height="4" fill="#8080ff" stroke="#6060e0" stroke-width="0.5"/>
<rect x="3.7" y="84.3" width="4" height="4" fill="#8080ff" stroke="#6060e0" stroke-width="0.5"/>
<path d="M11 77.3 L19.3 82.8 L16 86.5Z" fill="#000"/>
<rect x="4.8" y="103.2" width="16.1" height="7.4" fill="url(#waveg)"/>
<path d="M4.6 103.8 Q8.2 102.6 9.6 97.6 Q11 94 14.2 94 Q18.7 94 18.9 97.6 Q18.7 100.2 16.4 99.9 Q15.3 99.2 16.1 98.1 Q13.9 97.4 12.8 99.6 Q12 102.2 14.6 103.8 Z" fill="#8a8a8a" stroke="#3a3a3a" stroke-width="0.9" stroke-linejoin="round"/>
<path d="M7.4 103 Q10.3 101.2 11.3 97.8 Q12.6 95.4 15.2 95.5" stroke="#e8e8e8" stroke-width="0.6" fill="none"/>
<path d="M14.3 129.4 L20.6 134.6" stroke="#5a4a20" stroke-width="3.8" stroke-linecap="round"/>
<path d="M14.6 129.7 L20.3 134.3" stroke="url(#handleg)" stroke-width="2.6" stroke-linecap="round"/>
<circle cx="9.8" cy="123.6" r="5.6" fill="url(#lensg)" stroke="#3e3e3e" stroke-width="1.2"/>
<path d="M4.3 146.3 L11.5 141.8 L19 155 L11.5 159.5Z" fill="#f6c9b5" stroke="#333" stroke-width="0.9"/>
<path d="M6.5 146.5 L8 145.6 M8 149 L9.5 148 M9.5 151.5 L11 150.6 M11 154 L12.5 153" stroke="#333" stroke-width="0.6"/>
<rect x="5.6" y="167.5" width="14" height="14" fill="url(#rectg)" stroke="#2e2e2e" stroke-width="1"/>
<path d="M5.5 193 L13.5 189.3 L20.5 195.5 L20 203.5 L12 206.5 L5.5 201.5Z" fill="#9a9ad8" stroke="#444" stroke-width="0.8"/>
<path d="M13.5 189.8 L20.2 195.5 L19.8 203 L14 198Z" fill="#dcdcfa"/>
<path d="M6 201.3 L14 198 L19.8 203.3 L12 206.2Z" fill="#3c3c9a"/>
<circle cx="12.6" cy="222.2" r="7" fill="url(#ellg)" stroke="#333" stroke-width="1"/>
<path d="M4.5 243 L9.5 238.3 L14.5 242 L13 248.5 L7 249.5Z" fill="url(#starg)" stroke="#333" stroke-width="0.8"/>
<path d="M15.00,241.50 L16.76,245.57 L21.18,245.99 L17.85,248.93 L18.82,253.26 L15.00,251.00 L11.18,253.26 L12.15,248.93 L8.82,245.99 L13.24,245.57Z" fill="url(#starg)" stroke="#333" stroke-width="0.8"/>
<polyline points="12.17,270.38 12.18,270.32 12.20,270.25 12.22,270.19 12.25,270.12 12.29,270.06 12.33,270.00 12.39,269.94 12.45,269.88 12.52,269.83 12.59,269.79 12.68,269.75 12.76,269.72 12.86,269.70 12.95,269.68 13.06,269.67 13.16,269.68 13.27,269.69 13.38,269.71 13.49,269.75 13.60,269.79 13.70,269.84 13.81,269.91 13.91,269.98 14.01,270.07 14.10,270.17 14.18,270.27 14.26,270.39 14.32,270.51 14.38,270.65 14.43,270.79 14.47,270.93 14.49,271.09 14.50,271.24 14.50,271.40 14.49,271.57 14.46,271.73 14.41,271.89 14.35,272.06 14.28,272.22 14.19,272.37 14.09,272.52 13.98,272.67 13.85,272.81 13.71,272.93 13.55,273.05 13.38,273.16 13.21,273.25 13.02,273.33 12.82,273.40 12.62,273.45 12.41,273.48 12.19,273.50 11.97,273.50 11.75,273.48 11.53,273.45 11.30,273.39 11.08,273.31 10.87,273.22 10.66,273.11 10.45,272.98 10.26,272.83 10.07,272.66 9.90,272.48 9.74,272.28 9.59,272.07 9.46,271.84 9.35,271.60 9.26,271.35 9.18,271.09 9.13,270.82 9.10,270.55 9.09,270.27 9.10,269.99 9.14,269.70 9.19,269.42 9.28,269.14 9.38,268.86 9.51,268.59 9.66,268.33 9.84,268.08 10.03,267.84 10.25,267.61 10.48,267.40 10.74,267.21 11.01,267.04 11.30,266.88 11.60,266.76 11.91,266.65 12.24,266.57 12.57,266.51 12.91,266.48 13.25,266.48 13.60,266.50 13.95,266.55 14.29,266.64 14.63,266.74 14.96,266.88 15.29,267.05 15.60,267.24 15.90,267.45 16.18,267.70 16.45,267.96 16.69,268.25 16.92,268.56 17.12,268.89 17.29,269.24 17.44,269.60 17.56,269.98 17.65,270.37 17.71,270.76 17.74,271.17 17.73,271.58 17.70,271.99 17.63,272.39 17.52,272.80 17.39,273.20 17.22,273.59 17.02,273.97 16.79,274.33 16.53,274.68 16.24,275.00 15.92,275.31 15.58,275.59 15.22,275.85 14.83,276.07 14.42,276.27 14.00,276.44 13.56,276.57 13.10,276.67 12.64,276.73 12.17,276.76 11.70,276.74 11.23,276.70 10.76,276.61 10.29,276.48 9.83,276.32 9.39,276.12 8.96,275.89 8.54,275.62 8.15,275.31 7.78,274.98 7.43,274.61 7.11,274.22 6.83,273.79 6.57,273.35 6.35,272.88 6.17,272.39 6.02,271.89 5.92,271.37 5.85,270.85 5.83,270.31 5.84,269.78 5.91,269.24 6.01,268.71 6.16,268.18 6.34,267.67 6.57,267.17 6.84,266.68 7.15,266.21 7.50,265.77 7.89,265.36 8.30,264.97 8.75,264.62 9.23,264.30 9.73,264.02 10.26,263.77 10.81,263.57 11.38,263.41 11.96,263.30 12.55,263.23 13.14,263.21 13.74,263.23 14.34,263.31 14.94,263.43 15.53,263.60 16.10,263.81 16.66,264.07 17.20,264.38 17.71,264.73 18.20,265.12 18.66,265.55 19.09,266.02 19.48,266.52 19.83,267.05 20.14,267.61 20.41,268.20 20.62,268.81 20.80,269.44 20.92,270.09 20.99,270.74 21.01,271.40 20.98,272.07 20.89,272.73 20.75,273.39 20.56,274.03 20.32,274.67 20.03,275.28 19.69,275.87 19.30,276.44 18.87,276.98" fill="none" stroke="#2a2a2a" stroke-width="1.1"/>
<path d="M4.6 285.8 Q6.5 284.8 8.3 285.6 Q9.2 286.8 7.5 289.2 L4.6 293.3 Q7 293.6 9 293.6 Q10.5 295 10.2 298 Q10.6 301.8 13.5 301.8 Q17 301.6 19.3 297.6" stroke="#555" stroke-width="1" fill="none"/>
<path d="M15.4 284.3 Q19 285 21.3 289.5 L19.4 294.2 L13.4 291.3 Z" fill="url(#pencilg)"/>
<path d="M13.4 291.3 L19.4 294.2 L12.6 300.6 Z" fill="#fff6d0" stroke="#333" stroke-width="0.5"/>
<path d="M13.1 297.6 L15.3 298.6 L12.6 300.6Z" fill="#111"/>
<path d="M15.4 284.3 L12.6 300.6 M21.3 289.5 L12.6 300.6" stroke="#333" stroke-width="0.6" fill="none"/>
<path d="M4.8 309.5 H13.8" stroke="#666" stroke-width="1"/>
<path d="M5.2 310 Q9.5 315 10.3 319 Q10.8 322.5 9 324.2" stroke="#333" stroke-width="0.75" fill="none"/>
<circle cx="5.6" cy="324.8" r="1.5" fill="#fff" stroke="#111" stroke-width="1"/>
<path d="M7 324.8 H12" stroke="#111" stroke-width="1.1"/>
<path d="M15.8 308.6 Q19.5 309.5 21.8 313.6 L19.2 317.9 L13.8 314.9 Z" fill="url(#penblue)" stroke="#2a4a6a" stroke-width="0.5"/>
<ellipse cx="16.6" cy="317.6" rx="2.3" ry="1.2" transform="rotate(32 16.6 317.6)" fill="#f0c020" stroke="#555" stroke-width="0.3"/>
<path d="M14.8 318.6 L17.8 320.2 L11.8 324.9 Z" fill="#333"/>
<path d="M4 332.4 Q6.5 332.4 8.8 333.2 Q10.6 335 10.4 338 Q9.9 342 10 345.2 Q10.5 347.6 12.3 348 Q16.5 347.2 20.8 346.8 Q17.5 349.6 14 349.8 Q11.5 350 10 349.6 Q7.4 348.5 6.8 346 Q6 342 5.8 338 Q5.5 334.5 4 332.4Z" fill="#0a0a0a"/>
<path d="M14 333.2 L21.6 334.3 L19.6 337.7 L15.2 336.4Z" fill="url(#penblue)"/>
<path d="M15.2 336.4 L19.6 337.7 L18.4 339.3 L14.6 338Z" fill="#c01818"/>
<path d="M12.6 338.6 Q16 338.4 19.2 340 Q17.5 344 12 347.4 Q11.6 342 12.6 338.6Z" fill="#f0d050" stroke="#444" stroke-width="0.5"/>
<circle cx="14.2" cy="341.4" r="0.8" fill="#111"/>
<path d="M4.4 371.6 L9.2 357.7 H14.2 L18.2 371.6 H14.6 L13.7 368.8 H9.3 L8.3 371.6Z M10 366.3 H12.9 L11.5 361.6Z" fill="#111" fill-rule="evenodd"/>
<path d="M19.3 357.6 V373.3 M17.6 357.5 H21 M17.6 373.4 H21" stroke="#8a8a8a" stroke-width="0.8"/>
<g fill="#222"><circle cx="6.6" cy="382.4" r="0.9"/><circle cx="5.6" cy="385.6" r="0.9"/><circle cx="7.1" cy="389" r="0.9"/><circle cx="8.6" cy="383.8" r="0.6"/></g>
<g fill="#aaa"><circle cx="9.6" cy="385.5" r="0.9"/><circle cx="9" cy="388" r="0.6"/><circle cx="10.5" cy="383.5" r="0.5"/></g>
<path d="M13.2 388.5 Q13 383.6 15.4 383.5 Q17.6 383.5 17.6 388.5Z" fill="#eee" stroke="#444" stroke-width="0.8"/>
<path d="M12 389.2 Q16 387.8 19.8 388.6 Q21.2 392 21 396.6 Q18.5 397.8 16 397.4 Q13 396 12 393Z" fill="url(#sprayg)" stroke="#3a7a20" stroke-width="0.5"/>
<path d="M13 388.3 H17.8" stroke="#d8a020" stroke-width="1.1"/>
<path d="M12.5 404.3 L19.5 408.6 L12.5 420.8 L5.5 416.3Z" fill="url(#eraserg)" stroke="#333" stroke-width="0.9"/>
<ellipse cx="11.5" cy="444.2" rx="7.5" ry="2.1" fill="#7cc67a" stroke="#222" stroke-width="0.8"/>
<path d="M8 434 L16.5 428.5 L21 437 L12.5 441.5Z" fill="url(#blueg)" stroke="#222" stroke-width="0.8"/>
<path d="M7.5 434.5 Q8 439 10 443" stroke="#3aaa3a" stroke-width="1.2" fill="none"/>
<path d="M9 431 L9.5 428.5 L11 434" stroke="#555" stroke-width="0.6" fill="none"/>
<rect x="4.2" y="452.3" width="16.6" height="16.3" fill="url(#greeng)"/>
<path d="M7.8 457.3 L17.5 465" stroke="#222" stroke-width="0.8"/>
<rect x="6.3" y="455.8" width="3" height="3" fill="#fff" stroke="#222" stroke-width="0.8"/>
<rect x="16" y="463.5" width="3" height="3" fill="#fff" stroke="#222" stroke-width="0.8"/>
<path d="M15 478.5 L18.5 475.5 Q21 474.5 21 477 L18 481Z" fill="#111"/>
<path d="M13.5 479 L17.5 482.5" stroke="#111" stroke-width="1.6"/>
<path d="M15 481 L8.5 488.5" stroke="#333" stroke-width="1.8"/>
<path d="M15 481 L8.5 488.5" stroke="#9cc4e0" stroke-width="0.8"/>
<circle cx="7.8" cy="491.8" r="1.2" fill="#5a8ac0"/>
<path d="M13.5 501 H18 V512 M9 504 L6.5 511 M13 508 H18" stroke="#333" stroke-width="0.7" fill="none"/>
<rect x="7.8" y="499.3" width="5.6" height="4.8" fill="#bcd6ee" stroke="#333" stroke-width="0.6"/>
<rect x="10.6" y="506" width="5.4" height="4" fill="#f0c020" stroke="#333" stroke-width="0.6"/>
<rect x="4" y="511.3" width="5.6" height="5" fill="#bcd6ee" stroke="#333" stroke-width="0.6"/>
<rect x="15.6" y="511.3" width="5.6" height="5" fill="#bcd6ee" stroke="#333" stroke-width="0.6"/>
<path d="M723.6 48 H731 L734.2 51.2 V60.8 H723.6Z" fill="url(#pageg)" stroke="#b8b8b8" stroke-width="0.7"/>
<path d="M731 48 V51.2 H734.2" fill="#e8e8e8" stroke="#b8b8b8" stroke-width="0.6"/>
<path d="M731 54.8 H733.6 V57 H735.8 V59.6 H733.6 V61.8 H731 V59.6 H728.8 V57 H731Z" fill="#78b830" stroke="#5a9020" stroke-width="0.6" stroke-linejoin="round"/>
<path d="M723.8 70.3 H733 L735.3 72.5 V77 H723.8Z" fill="#f4f4f4" stroke="#bbb" stroke-width="0.6"/>
<rect x="723" y="75.4" width="13" height="7.8" rx="0.8" fill="url(#folderg)" stroke="#c84a18" stroke-width="0.4"/>
<rect x="722.8" y="101" width="13.2" height="5.2" rx="1.2" fill="#777" stroke="#555" stroke-width="0.5"/>
<rect x="723.2" y="93" width="12.4" height="9" rx="1" fill="#d8d8d8" stroke="#aaa" stroke-width="0.5"/>
<path d="M727.3 92 H731.3 V96 H733.8 L729.3 100.5 L724.8 96 H727.3Z" fill="#8cc820" stroke="#6a9a10" stroke-width="0.4"/>
<rect x="725.5" y="114.5" width="8" height="5" fill="#fff" stroke="#777" stroke-width="0.6"/>
<rect x="722.8" y="119" width="13.2" height="8.5" rx="1.5" fill="#d8d8d8" stroke="#777" stroke-width="0.6"/>
<rect x="724.5" y="121" width="10" height="2.2" fill="#333"/>
<rect x="722" y="136" width="14" height="0.8" fill="#dcdad6"/>
<path d="M723.5 146 H731.5 L734.5 149 V159 H723.5Z" fill="url(#pageg)" stroke="#9a9a9a" stroke-width="0.7"/>
<path d="M722.8 151.5 H727 V149.3 L731.5 153.3 L727 157.3 V155.1 H722.8Z" fill="#5aa0e0"/>
<path d="M723.5 168 H731.5 L734.5 171 V181 H723.5Z" fill="url(#pageg)" stroke="#9a9a9a" stroke-width="0.7"/>
<rect x="724.5" y="170" width="5" height="2" fill="#e8b090"/>
<path d="M727 173.5 H731.5 V171.3 L736 175.3 L731.5 179.3 V177.1 H727Z" fill="#e060d8"/>
<rect x="722" y="190" width="14" height="0.8" fill="#dcdad6"/>
<path d="M722.3 206.3 L727.8 201 V203.8 Q734.8 203.6 736.2 211.8 Q733.5 208.6 727.8 209 V211.8 Z" fill="#f07d32" stroke="#e06a20" stroke-width="0.5" stroke-linejoin="round"/>
<path d="M736.5 229 L731 223.7 V226.5 Q724 226.3 722.6 234.5 Q725.3 231.3 731 231.7 V234.5 Z" fill="#dddcda" stroke="#d6d5d3" stroke-width="0.5" stroke-linejoin="round"/>
<rect x="722" y="244" width="14" height="0.8" fill="#dcdad6"/>
<rect x="723.2" y="253.2" width="8" height="9.8" fill="#f2f2f2" stroke="#808080" stroke-width="0.8"/><rect x="727.3" y="257.2" width="8.4" height="10" fill="#f2f2f2" stroke="#808080" stroke-width="0.8"/>
<path d="M724.5 255.5 H729.5 M724.5 257.3 H726.5 M728.8 259.5 H734 M728.8 261.3 H734 M728.8 263.1 H734 M728.8 264.9 H732.5" stroke="#a8a8a8" stroke-width="0.5"/>
<path d="M725.8 275.8 L731 285 M733.2 275.8 L728 285" stroke="#8a8a8a" stroke-width="1.3"/>
<ellipse cx="726.8" cy="287" rx="2.1" ry="2.3" fill="none" stroke="#c83a3a" stroke-width="1.4"/><ellipse cx="732.2" cy="287" rx="2.1" ry="2.3" fill="none" stroke="#c83a3a" stroke-width="1.4"/>
<rect x="723" y="299.5" width="8.5" height="10" fill="#c49a6c" stroke="#8a6a40" stroke-width="0.5"/><rect x="727" y="302" width="8.5" height="10" fill="#f0f0f0" stroke="#999" stroke-width="0.6"/>
<rect x="725.5" y="298.3" width="3.5" height="2" fill="#888"/>
<rect x="722" y="320" width="14" height="0.8" fill="#dcdad6"/>
<path d="M733.8 339.5 L735.6 341.3" stroke="#111" stroke-width="2.2" stroke-linecap="round"/>
<circle cx="729.4" cy="335.3" r="5.9" fill="url(#lensg)" stroke="#2a2a2a" stroke-width="1.3"/>
<rect x="726.2" y="332.6" width="6.4" height="5.2" fill="#fdfdfd" stroke="#9a9a9a" stroke-width="0.6"/>
<path d="M733.8 362.0 L735.6 363.8" stroke="#111" stroke-width="2.2" stroke-linecap="round"/>
<circle cx="729.4" cy="357.8" r="5.9" fill="url(#lensg)" stroke="#2a2a2a" stroke-width="1.3"/>
<rect x="726.4" y="354.8" width="3.4" height="3.4" fill="#f0d060" stroke="#888" stroke-width="0.4"/><rect x="728.8" y="357.2" width="3.6" height="3.6" fill="#f0d060" stroke="#888" stroke-width="0.4"/>
<path d="M733.8 384.4 L735.6 386.2" stroke="#111" stroke-width="2.2" stroke-linecap="round"/>
<circle cx="729.4" cy="380.2" r="5.9" fill="url(#lensg)" stroke="#2a2a2a" stroke-width="1.3"/>
<rect x="727.2" y="376.8" width="4.4" height="6.8" fill="#f4f4f4" stroke="#555" stroke-width="0.6"/>
<rect x="722" y="396" width="14" height="0.8" fill="#dcdad6"/>
<rect x="722.5" y="405.5" width="8" height="7.5" fill="#c8daea" stroke="#556" stroke-width="0.6"/>
<rect x="725.5" y="408.5" width="10.5" height="10.5" fill="#d0e0ee" stroke="#556" stroke-width="0.9"/>
<rect x="722.5" y="428" width="8" height="7.5" fill="#c8daea" stroke="#556" stroke-width="0.6"/>
<rect x="725.5" y="431" width="10.5" height="10.5" fill="#d0e0ee" stroke="#556" stroke-width="0.9"/>
<rect x="728.4" y="436.4" width="4.8" height="3.4" fill="#f0c030" stroke="#333" stroke-width="0.5"/><path d="M729.3 436.4 V435.2 Q730.8 433.4 732.3 435.2 V436.4" fill="none" stroke="#333" stroke-width="0.7"/>
<rect x="722.5" y="450.5" width="8" height="7.5" fill="#c8daea" stroke="#556" stroke-width="0.6"/>
<rect x="725.5" y="453.5" width="10.5" height="10.5" fill="#d0e0ee" stroke="#556" stroke-width="0.9"/>
<rect x="728.4" y="458.9" width="4.8" height="3.4" fill="#60b040" stroke="#333" stroke-width="0.5"/><path d="M729.3 458.9 V457.7 Q730.8 455.9 732.3 457.7 V458.9" fill="none" stroke="#333" stroke-width="0.7"/>
<rect x="722" y="472" width="14" height="0.8" fill="#dcdad6"/>
<g fill="#111"><circle cx="723" cy="482.5" r="0.85"/><circle cx="734.6" cy="482.5" r="0.85"/><circle cx="723" cy="494" r="0.85"/><circle cx="734.6" cy="494" r="0.85"/></g>
<rect x="724.5" y="487" width="6.5" height="5.5" fill="#b8d0e8" stroke="#445" stroke-width="0.5"/><circle cx="731" cy="486" r="3" fill="#b8d0e8" stroke="#445" stroke-width="0.5"/>
<g fill="#111"><circle cx="723" cy="507.5" r="0.85"/><circle cx="734.8" cy="504.5" r="0.85"/><circle cx="723" cy="516" r="0.85"/><circle cx="732.8" cy="516" r="0.85"/><circle cx="735" cy="511.5" r="0.85"/></g>
<rect x="724.3" y="509" width="8" height="6" fill="#f0c840" stroke="#444" stroke-width="0.5"/><circle cx="731.5" cy="508" r="3.2" fill="#c0d8f0" stroke="#445" stroke-width="0.5"/>
<rect x="722" y="525.5" width="14" height="0.8" fill="#dcdad6"/>
<path d="M728.2 552.8 L733 555.5 L728.2 558.2Z" fill="#666"/>
<rect x="742.8" y="44.7" width="20.6" height="19.799999999999997" rx="3" fill="url(#pressed)" stroke="#c4c1bc" stroke-width="0.8"/>
<path d="M749.4 50.5 L755.3 56.8" stroke="#222" stroke-width="1"/>
<path d="M752.7 57.1 L756.0 57.5 L755.6 54.2Z" fill="#000"/>
<path d="M749.4 48.2 L751.6999999999999 50.5 L749.4 52.8 L747.1 50.5Z" fill="#c8c8ff" stroke="#3030ff" stroke-width="1.1"/>
<path d="M757.5 56.7 L759.8 59 L757.5 61.3 L755.2 59Z" fill="#c0c0f0" stroke="#30a030" stroke-width="1.1"/>
<rect x="746" y="69.5" width="14" height="0.8" fill="#dcdad6"/>
<path d="M749.4 81 L755.3 87.3" stroke="#222" stroke-width="1"/>
<path d="M752.7 87.6 L756.0 88.0 L755.6 84.7Z" fill="#000"/>
<path d="M749.4 78.7 L751.6999999999999 81 L749.4 83.3 L747.1 81Z" fill="#c8c8ff" stroke="#3030ff" stroke-width="1.1"/>
<path d="M757.5 87.2 L759.8 89.5 L757.5 91.8 L755.2 89.5Z" fill="#c0c0f0" stroke="#30a030" stroke-width="1.1"/>
<path d="M758 102 V112.5 H746.5" stroke="#999" stroke-width="0.8" stroke-dasharray="1 0.8" fill="none"/>
<path d="M758 124 V134.5 H746.5" stroke="#999" stroke-width="0.8" stroke-dasharray="1 0.8" fill="none"/><circle cx="757.8" cy="134.3" r="1.6" fill="#ccc" stroke="#999" stroke-width="0.5"/>
<path d="M757.5 149 V156.5 H746.5" stroke="#999" stroke-width="0.8" stroke-dasharray="1 0.8" fill="none"/><ellipse cx="757.5" cy="149.5" rx="1.3" ry="2.3" fill="#ccc" stroke="#999" stroke-width="0.5"/>
<path d="M758 169 V179 H747" stroke="#999" stroke-width="0.8" stroke-dasharray="1 0.8" fill="none"/><circle cx="750" cy="172" r="1.3" fill="#ddd" stroke="#999" stroke-width="0.5"/>
<rect x="746" y="190" width="14" height="0.8" fill="#dcdad6"/>
<rect x="742.8" y="196.5" width="20.6" height="20.0" rx="3" fill="url(#pressed)" stroke="#c4c1bc" stroke-width="0.8"/>
<path d="M749.4 202.5 L755.3 208.8" stroke="#222" stroke-width="1"/>
<path d="M752.7 209.1 L756.0 209.5 L755.6 206.2Z" fill="#000"/>
<path d="M749.4 200.2 L751.6999999999999 202.5 L749.4 204.8 L747.1 202.5Z" fill="#c8c8ff" stroke="#3030ff" stroke-width="1.1"/>
<path d="M757.5 208.7 L759.8 211 L757.5 213.3 L755.2 211Z" fill="#c0c0f0" stroke="#30a030" stroke-width="1.1"/>
<path d="M747.3 223.6 Q755.5 224.5 757.2 232.8 Q758.5 232 759.6 229.8" stroke="#2a9a2a" stroke-width="1.3" fill="none" stroke-linecap="round"/>
<path d="M746.5 257 L759 245 M747 252.5 L759.5 249" stroke="#555" stroke-width="0.7"/><circle cx="753" cy="250.8" r="1.7" fill="#50a050" stroke="#208020" stroke-width="0.5"/>
<path d="M746.5 267 Q753 268 753.5 275 M753.5 275 Q756 273 758.5 270.5" stroke="#555" stroke-width="0.7" fill="none"/><path d="M752.5 273 L754.5 275 L752.5 277 L750.5 275Z" fill="#50a050" stroke="#208020" stroke-width="0.6"/>
<path d="M746.5 289 Q750 290 752.5 292 Q753 297 756 299 Q758 297 759.5 295" stroke="#555" stroke-width="0.7" fill="none"/><rect x="751.3" y="290.5" width="2.8" height="2.8" fill="#50a050" stroke="#208020" stroke-width="0.6"/>
<path d="M747 324.5 L758.5 313" stroke="#c03030" stroke-width="0.8"/><path d="M748 321 L749.5 323 M750 319 L751.5 321 M755 315 L756.5 317 M756.5 313 L758 315" stroke="#e03030" stroke-width="0.8"/><circle cx="752.8" cy="318.8" r="1.5" fill="#50a050" stroke="#208020" stroke-width="0.5"/>
<rect x="746" y="334" width="14" height="0.8" fill="#dcdad6"/>
<rect x="742.8" y="340" width="20.6" height="19.5" rx="3" fill="url(#pressed)" stroke="#c4c1bc" stroke-width="0.8"/>
<path d="M749.4 345.5 L755.3 351.8" stroke="#222" stroke-width="1"/>
<path d="M752.7 352.1 L756.0 352.5 L755.6 349.2Z" fill="#000"/>
<path d="M749.4 343.2 L751.6999999999999 345.5 L749.4 347.8 L747.1 345.5Z" fill="#c8c8ff" stroke="#3030ff" stroke-width="1.1"/>
<path d="M757.5 351.7 L759.8 354 L757.5 356.3 L755.2 354Z" fill="#c0c0f0" stroke="#30a030" stroke-width="1.1"/>
<path d="M746.5 375.5 H757.5 V365.5" stroke="#999" stroke-width="0.8" fill="none"/><circle cx="751" cy="369.5" r="1.3" fill="#90d090" stroke="#30a030" stroke-width="0.7"/>
<path d="M747.3 390.6 H753.6 M750.45 387.5 V393.7" stroke="#333" stroke-width="1.1"/><path d="M757.3 387.5 V397.5 H746.5" stroke="#555" stroke-width="0.8" stroke-dasharray="1 0.6" fill="none"/>
<path d="M749 421 L752.6 409.7 H755.6 L759.6 421 H756.8 L756 418.6 H752.2 L751.5 421Z M752.9 416.4 H755.4 L754.15 412.4Z" fill="#111" fill-rule="evenodd"/><path d="M749 421.2 H759.5" stroke="#40a040" stroke-width="0.9"/><path d="M748.3 419 L750.1 420.8 L748.3 422.6 L746.5 420.8Z" fill="#c0c0f0" stroke="#30a030" stroke-width="0.9"/>
<rect x="746" y="431.5" width="14" height="0.8" fill="#dcdad6"/>
<rect x="748.5" y="442" width="9" height="12" fill="url(#pageg)" stroke="#333" stroke-width="0.9"/>
<rect x="742.8" y="460.5" width="20.6" height="19.5" rx="3" fill="url(#pressed)" stroke="#c4c1bc" stroke-width="0.8"/>
<g stroke="#2a2aff" stroke-width="0.9"><path d="M748.5 464.5 V477.5"/><path d="M752.0 464.5 V477.5"/><path d="M755.5 464.5 V477.5"/><path d="M759.0 464.5 V477.5"/><path d="M747 466.0 H760.5"/><path d="M747 469.5 H760.5"/><path d="M747 473.0 H760.5"/><path d="M747 476.5 H760.5"/></g>
<g fill="#2a2aff"><circle cx="748.5" cy="466.0" r="0.9"/><circle cx="748.5" cy="469.5" r="0.9"/><circle cx="748.5" cy="473.0" r="0.9"/><circle cx="748.5" cy="476.5" r="0.9"/><circle cx="752.0" cy="466.0" r="0.9"/><circle cx="752.0" cy="469.5" r="0.9"/><circle cx="752.0" cy="473.0" r="0.9"/><circle cx="752.0" cy="476.5" r="0.9"/><circle cx="755.5" cy="466.0" r="0.9"/><circle cx="755.5" cy="469.5" r="0.9"/><circle cx="755.5" cy="473.0" r="0.9"/><circle cx="755.5" cy="476.5" r="0.9"/><circle cx="759.0" cy="466.0" r="0.9"/><circle cx="759.0" cy="469.5" r="0.9"/><circle cx="759.0" cy="473.0" r="0.9"/><circle cx="759.0" cy="476.5" r="0.9"/></g>
<rect x="742.8" y="482.5" width="20.6" height="20.0" rx="3" fill="url(#pressed)" stroke="#c4c1bc" stroke-width="0.8"/>
<path d="M748.2 487 V500 M758.2 487 V500 M751.6 500 L756 487" stroke="#3a3aff" stroke-width="1.1" fill="none"/>
</svg></body></html>
